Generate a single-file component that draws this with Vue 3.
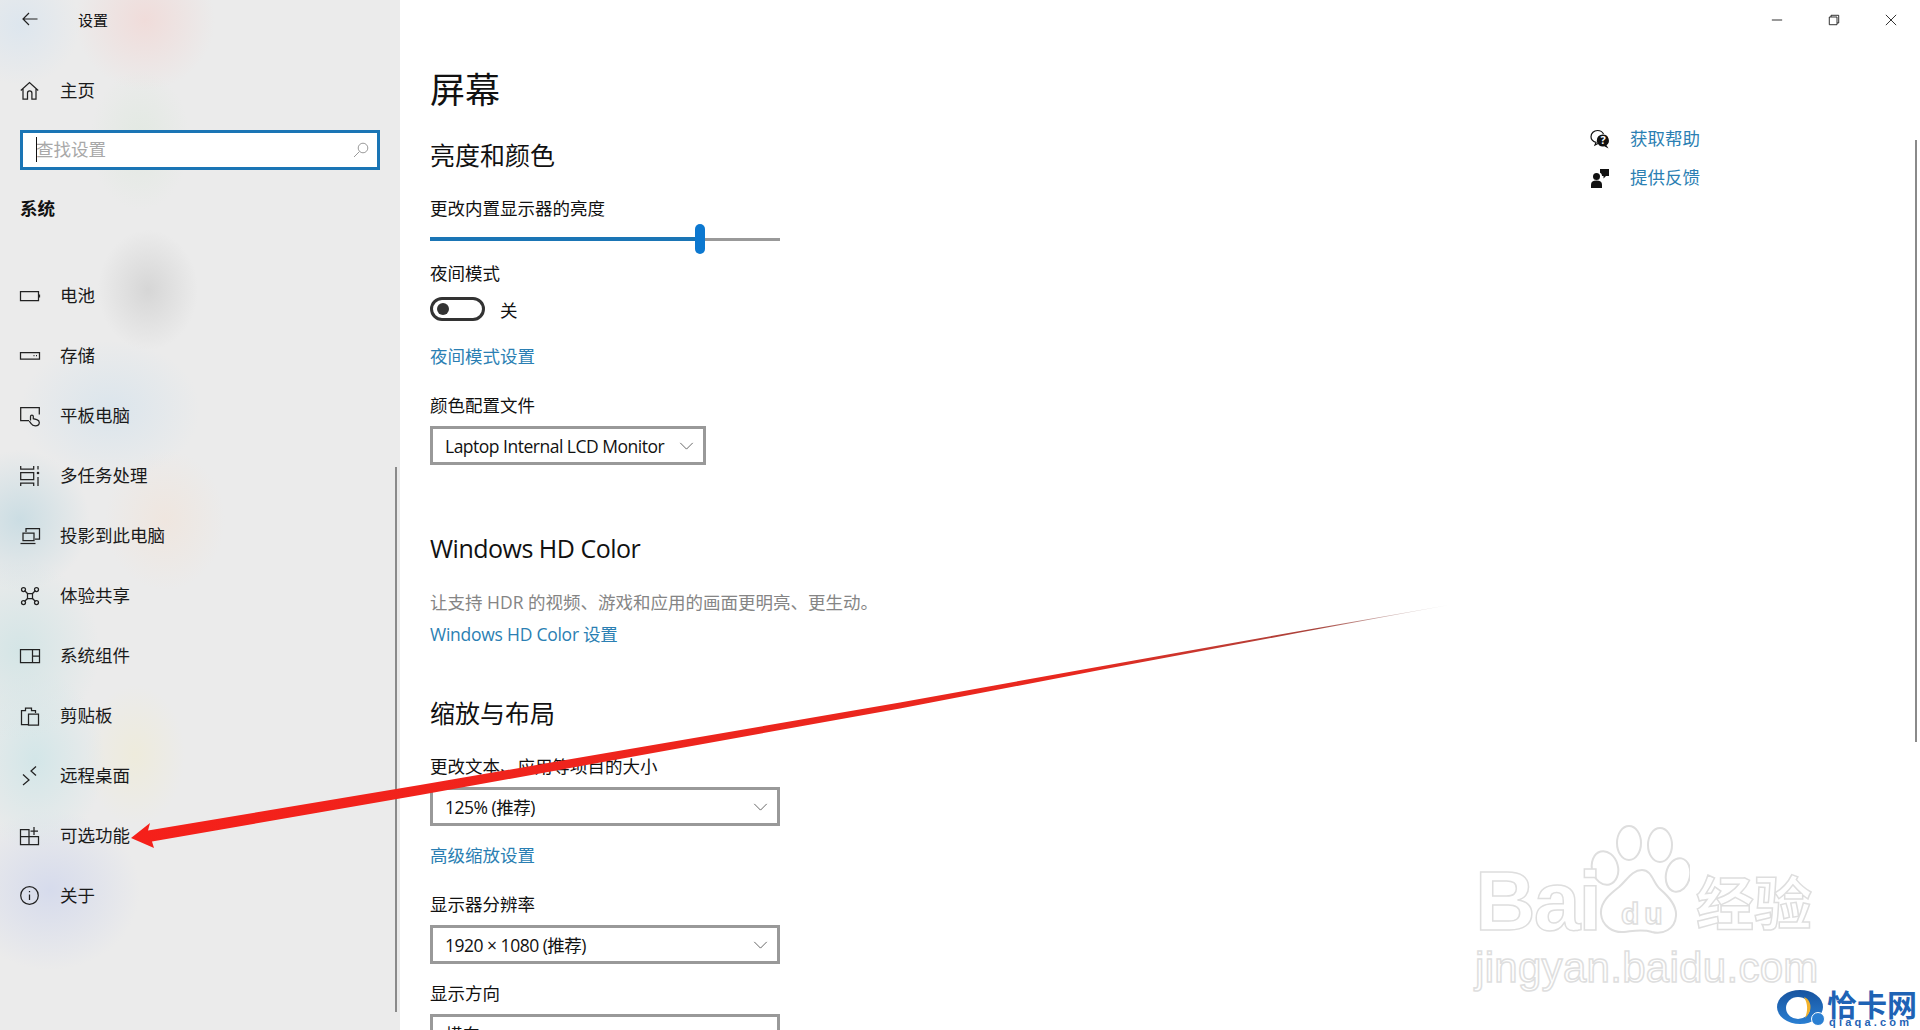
<template>
  <div class="window">
    <aside class="sidebar">
      <div class="titlebar">
        <svg class="back" viewBox="0 0 16 14"><path d="M15.5 7H1M7 1 1 7l6 6" /></svg>
        <span>设置</span>
      </div>
      <div class="nav-row home">
        <svg class="icon" viewBox="0 0 20 20"><path d="M.8 9.5 9.5 1.5l8.7 8M3 8v10h4.5v-6a2.2 2.2 0 0 1 4.4 0v6H16V8" /></svg>
        <span>主页</span>
      </div>
      <div class="search">
        <span class="caret"></span>
        <span class="placeholder">查找设置</span>
        <svg class="search-icon" viewBox="0 0 16 16"><circle cx="10" cy="6" r="4.8" /><path d="M6.5 9.5 1 15" /></svg>
      </div>
      <div class="group-title">系统</div>
      <nav class="nav">
        <div v-for="item in navItems" :key="item.label" class="nav-row">
          <svg class="icon" viewBox="0 0 20 20" v-html="item.icon"></svg>
          <span>{{ item.label }}</span>
        </div>
      </nav>
      <div class="side-scroll"></div>
    </aside>

    <main class="main">
      <section class="content">
        <h1>屏幕</h1>
        <h2 class="first">亮度和颜色</h2>
        <div class="label brightness">更改内置显示器的亮度</div>
        <div class="slider">
          <div class="slider-fill" :style="{ width: brightness + 'px' }"></div>
          <div class="slider-thumb"></div>
          <div class="slider-rest"></div>
        </div>
        <div class="label night">夜间模式</div>
        <div class="toggle-row">
          <div class="toggle"><span class="knob"></span></div>
          <span>关</span>
        </div>
        <a class="link night-link">夜间模式设置</a>
        <div class="label profile">颜色配置文件</div>
        <div class="select small">
          <span class="latin">Laptop Internal LCD Monitor</span>
          <svg class="chev" viewBox="0 0 16 9"><path d="M1 1l7 7 7-7" /></svg>
        </div>

        <h2 class="hd">Windows HD Color</h2>
        <div class="desc">让支持 HDR 的视频、游戏和应用的画面更明亮、更生动。</div>
        <a class="link hd-link">Windows HD Color 设置</a>

        <h2 class="scale">缩放与布局</h2>
        <div class="label size">更改文本、应用等项目的大小</div>
        <div class="select">
          <span class="latin">125% (推荐)</span>
          <svg class="chev" viewBox="0 0 16 9"><path d="M1 1l7 7 7-7" /></svg>
        </div>
        <a class="link adv-link">高级缩放设置</a>
        <div class="label res">显示器分辨率</div>
        <div class="select">
          <span class="latin">1920 × 1080 (推荐)</span>
          <svg class="chev" viewBox="0 0 16 9"><path d="M1 1l7 7 7-7" /></svg>
        </div>
        <div class="label orient">显示方向</div>
        <div class="select">
          <span>横向</span>
        </div>
      </section>

      <section class="help">
        <div class="help-row">
          <svg class="help-icon" viewBox="0 0 20 20">
            <path class="thin" d="M8 14.5 5 16l1-2.6C3 12.5 1 10.500 1 7.800 1 4 4 1.500 7.500 1.500c2.800 0 5 1.400 6 3.500" />
            <path class="solid" d="M13 5.500a6 6 0 0 1 3.500 10.800l2 3.200-4.300-2.200A6 6 0 1 1 13 5.500z" />
            <text x="13" y="15" class="q">?</text>
          </svg>
          <a class="link">获取帮助</a>
        </div>
        <div class="help-row">
          <svg class="help-icon" viewBox="0 0 20 20">
            <circle class="solid" cx="6.500" cy="8.500" r="3.500" />
            <path class="solid" d="M1 20v-3.500c0-2.500 2-4 5.500-4s5.500 1.500 5.500 4V20z" />
            <path class="solid" d="M10 1h9v7h-3l-2.500 2.500V8H12c0-1.500-.8-2.500-2-3.200z" />
          </svg>
          <a class="link">提供反馈</a>
        </div>
      </section>

      <div class="win-controls">
        <svg viewBox="0 0 14 14"><path d="M1 7h12" /></svg>
        <svg viewBox="0 0 14 14"><path d="M1.500 3.500h9v9h-9zM3.500 3.500v-2h9v9h-2" /></svg>
        <svg viewBox="0 0 14 14"><path d="M1 1l12 12M13 1 1 13" /></svg>
      </div>
      <div class="main-scroll"></div>
    </main>

    <div class="watermark">
      <svg class="paw" viewBox="0 0 100 110">
        <ellipse cx="15" cy="43" rx="13" ry="17" transform="rotate(-15 15 43)" />
        <ellipse cx="39" cy="18" rx="12" ry="17" />
        <ellipse cx="70" cy="20" rx="12" ry="17" />
        <ellipse cx="88" cy="50" rx="12" ry="17" transform="rotate(12 88 50)" />
        <path d="M52 45c-10 0-15 10-23 17-9 7-19 15-18 27 1 12 12 19 23 18 10-1 18-3 28 0 11 3 23-3 24-16 1-11-8-20-16-27-7-6-8-19-18-19z" />
      </svg>
      <span class="wm-bai">Bai</span>
      <span class="wm-du">du</span>
      <span class="wm-cn">经验</span>
      <span class="wm-url">jingyan.baidu.com</span>
    </div>

    <div class="qiaqa">
      <svg class="qiaqa-logo" viewBox="0 0 48 36">
        <defs>
          <linearGradient id="ring" x1="0" y1="0" x2="0" y2="1">
            <stop offset="0" stop-color="#17539f" />
            <stop offset="1" stop-color="#2a7fd2" />
          </linearGradient>
        </defs>
        <ellipse cx="23" cy="17" rx="23" ry="17" fill="url(#ring)" />
        <ellipse cx="21" cy="18" rx="12" ry="11" fill="#fff" />
        <path d="M27 7c8 3 9 15 1 21 3-7 3-14-1-21z" fill="#f1b12c" />
        <circle cx="41" cy="29" r="6.500" fill="#2a7fd2" stroke="#fff" />
      </svg>
      <span class="qiaqa-name">恰卡网</span>
      <span class="qiaqa-url">qiaqa.com</span>
    </div>

    <svg class="arrow" viewBox="0 0 1920 1030">
      <defs>
        <linearGradient id="arrow-fade" x1="131" y1="838" x2="1449" y2="605" gradientUnits="userSpaceOnUse">
          <stop offset="0" stop-color="#f5201a" />
          <stop offset="0.72" stop-color="#e8281f" />
          <stop offset="0.9" stop-color="#a8443c" />
          <stop offset="1" stop-color="#bbb" stop-opacity="0.4" />
        </linearGradient>
      </defs>
      <path d="M131 838 150 823 148 830.500 420 785 900 702.500 1100 666.500 1300 631 1449 605 1300 632.500 1100 670 900 708.500 420 795 152 841.500 154 848z" fill="url(#arrow-fade)" />
    </svg>
  </div>
</template>

<script setup>
const brightness = 265

const navItems = [
  { label: '电池', icon: '<path d="M.5 5.500h18v9H.5z"/><path d="M19.500 8.500v3"/>' },
  { label: '存储', icon: '<path d="M.5 6.500h19v6.500H.5z"/><path d="M13.500 9.500h1M16 9.500h1"/>' },
  { label: '平板电脑', icon: '<path d="M9 14.500H.7V1.500h18.600v7"/><path d="M10.500 14.500v-4a1.400 1.400 0 0 1 2.800 0v2.200l3.500 1c1.500.5 2.500 1.300 2.500 2.800 0 2-1.500 3.300-4 3.300-2 0-3.300-.7-4-2l-2-2.700"/>' },
  { label: '多任务处理', icon: '<path d="M.7 0v3h13V0M.7 20v-3h13v3"/><path d="M.7 6.500h13v7H.7z"/><path d="M18 0v3.500M18 11v9"/><circle class="dot" cx="18" cy="7" r="1.300"/>' },
  { label: '投影到此电脑', icon: '<path d="M6 6V2.500h13.500V13H15"/><path d="M3 7h11v7.500H3z"/><path d="M.5 17.500h15"/>' },
  { label: '体验共享', icon: '<path d="M7.500 7.500h5v5h-5z"/><path d="M7.500 7.500 4.500 4.500M12.500 7.500l3-3M7.500 12.500l-3 3M12.500 12.500l3 3"/><circle cx="3.500" cy="3.500" r="2"/><circle cx="16.500" cy="3.500" r="2"/><circle cx="3.500" cy="16.500" r="2"/><circle cx="16.500" cy="16.500" r="2"/>' },
  { label: '系统组件', icon: '<path d="M.5 3.500h19v13H.5z"/><path d="M12.500 3.500v13M12.500 10h7"/>' },
  { label: '剪贴板', icon: '<path d="M8 18.500H1.500V4.500h4V2h6v2.500h4V7"/><path d="M8.500 8h10v11h-10z"/>' },
  { label: '远程桌面', icon: '<path d="M3 8.500l6 5.500-6 5"/><path d="M16 .5l-5 4.500 5 4.500"/>' },
  { label: '可选功能', icon: '<path d="M.5 3.500h8.500v7H.5zM.5 10.500h8.500v8H.5zM9 10.500h9.500v8H9z"/><path d="M14 1v8M10.500 5h7.500"/>' },
  { label: '关于', icon: '<circle cx="9.500" cy="9.500" r="8.800"/><path d="M9.500 8.500v5.500M9.500 5v1.300"/>' }
]
</script>

<style scoped>
.window {
  position: relative;
  display: flex;
  width: 1920px;
  height: 1030px;
  overflow: hidden;
  background: #fff;
  color: #111;
  font-family: "Open Sans", "Noto Sans CJK SC", sans-serif;
  font-size: 17.5px;
}

.sidebar {
  position: relative;
  flex: none;
  width: 400px;
  background-color: #ebebeb;
  background-image:
    radial-gradient(ellipse 70px 70px at 145px 20px, #f0dcda 0%, rgba(240, 220, 218, 0) 100%),
    radial-gradient(ellipse 60px 60px at 20px 25px, #dde6ee 0%, rgba(221, 230, 238, 0) 100%),
    radial-gradient(ellipse 50px 60px at 148px 290px, #d6d6d6 0%, rgba(214, 214, 214, 0) 100%),
    radial-gradient(ellipse 50px 70px at 140px 140px, #e2e9e2 0%, rgba(226, 233, 226, 0) 100%),
    radial-gradient(ellipse 90px 70px at 110px 410px, #dbe5ec 0%, rgba(219, 229, 236, 0) 100%),
    radial-gradient(ellipse 70px 70px at 20px 520px, #cbdde3 0%, rgba(203, 221, 227, 0) 100%),
    radial-gradient(ellipse 60px 70px at 165px 520px, #efe6df 0%, rgba(239, 230, 223, 0) 100%),
    radial-gradient(ellipse 80px 90px at 20px 650px, #d4e5e6 0%, rgba(212, 229, 230, 0) 100%),
    radial-gradient(ellipse 70px 90px at 35px 760px, #d3e6e8 0%, rgba(211, 230, 232, 0) 100%),
    radial-gradient(ellipse 50px 70px at 135px 755px, #eeebdc 0%, rgba(238, 235, 220, 0) 100%),
    radial-gradient(ellipse 90px 80px at 50px 890px, #d6dbec 0%, rgba(214, 219, 236, 0) 100%);
}

.titlebar {
  display: flex;
  align-items: center;
  height: 38px;
  padding-bottom: 2px;
  font-size: 15px;
}

.back {
  width: 16px;
  height: 14px;
  margin-left: 22px;
  margin-right: 40px;
  fill: none;
  stroke: #222;
  stroke-width: 1.2;
}

.nav-row {
  display: flex;
  align-items: center;
  gap: 20px;
  height: 60px;
  padding-left: 20px;
  color: #1a1a1a;
}

.nav-row span {
  margin: -3px 0 0 0;
}

.home {
  margin-top: 21px;
}

.icon {
  flex: none;
  width: 20px;
  height: 20px;
  overflow: visible;
  fill: none;
  stroke: #222;
  stroke-width: 1.25;
}

.search {
  position: relative;
  display: flex;
  align-items: center;
  justify-content: space-between;
  box-sizing: border-box;
  width: 360px;
  height: 40px;
  margin: 9px 0 0 20px;
  padding: 0 8px 0 13px;
  border: 3px solid #1a75b5;
  background: #fff;
}

.caret {
  position: absolute;
  left: 13px;
  top: 4px;
  width: 1px;
  height: 25px;
  background: #111;
}

.placeholder {
  margin-top: -3px;
  color: #a8a8a8;
}

.search-icon {
  width: 16px;
  height: 16px;
  fill: none;
  stroke: #9a9a9a;
  stroke-width: 1;
}

.group-title {
  height: 24px;
  margin: 26px 0 0 20px;
  line-height: 24px;
  font-weight: 700;
}

.nav {
  margin-top: 46px;
}

.side-scroll {
  position: absolute;
  left: 395px;
  top: 467px;
  width: 2px;
  height: 545px;
  background: #8a8a8a;
}

.main {
  position: relative;
  display: flex;
  flex: 1;
}

.content {
  flex: 1;
  padding: 66px 0 0 30px;
}

h1,
h2 {
  margin: 0;
  font-weight: 400;
}

h1 {
  height: 48px;
  font-size: 35px;
  line-height: 48px;
}

h2 {
  height: 36px;
  font-size: 25px;
  line-height: 36px;
}

.first {
  margin-top: 23px;
}

.hd {
  margin-top: 65px;
  letter-spacing: -0.5px;
}

.scale {
  margin-top: 49px;
}

.label,
.link,
.desc {
  display: block;
  height: 24px;
  line-height: 24px;
}

.link {
  color: #2b7fb3;
}

.desc {
  margin-top: 24px;
  color: #858585;
}

.brightness {
  margin-top: 23px;
}

.slider {
  display: flex;
  align-items: center;
  width: 350px;
  height: 30px;
  margin-top: 4px;
}

.slider-fill {
  height: 4px;
  background: #1a75b5;
}

.slider-thumb {
  width: 10px;
  height: 30px;
  border-radius: 5px;
  background: #0c78d0;
}

.slider-rest {
  flex: 1;
  height: 3px;
  background: #999;
}

.night {
  margin-top: 7px;
}

.toggle-row {
  display: flex;
  align-items: center;
  gap: 15px;
  height: 24px;
  margin-top: 12px;
}

.toggle {
  display: flex;
  align-items: center;
  box-sizing: border-box;
  width: 55px;
  height: 24px;
  padding-left: 4px;
  border: 3px solid #333;
  border-radius: 12px;
}

.knob {
  width: 12px;
  height: 12px;
  border-radius: 50%;
  background: #333;
}

.night-link {
  margin-top: 23px;
}

.profile {
  margin-top: 25px;
}

.select {
  display: flex;
  align-items: center;
  justify-content: space-between;
  box-sizing: border-box;
  width: 350px;
  height: 39px;
  margin-top: 9px;
  padding: 0 9px 0 12px;
  border: 3px solid #999;
  background: #fff;
  white-space: nowrap;
}

.small {
  width: 276px;
}

.latin {
  letter-spacing: -0.5px;
}

.chev {
  flex: none;
  width: 15px;
  height: 8px;
  fill: none;
  stroke: #555;
  stroke-width: 1;
}

.hd-link {
  margin-top: 8px;
  letter-spacing: -0.25px;
}

.size {
  margin-top: 23px;
}

.adv-link {
  margin-top: 17px;
}

.res {
  margin-top: 25px;
}

.orient {
  margin-top: 17px;
}

.help {
  flex: none;
  width: 330px;
  padding-top: 119px;
}

.help-row {
  display: flex;
  align-items: center;
  gap: 20px;
  height: 39px;
}

.help-row .link {
  margin-top: -2px;
}

.help-icon {
  width: 20px;
  height: 20px;
}

.thin {
  fill: none;
  stroke: #111;
  stroke-width: 1.2;
}

.solid {
  fill: #111;
}

.q {
  fill: #fff;
  font-size: 11px;
  font-weight: 700;
  text-anchor: middle;
}

.win-controls {
  position: absolute;
  top: 14px;
  right: 23px;
  display: flex;
  gap: 45px;
}

.win-controls svg {
  width: 12px;
  height: 12px;
  fill: none;
  stroke: #111;
  stroke-width: 1;
}

.main-scroll {
  position: absolute;
  right: 3px;
  top: 140px;
  width: 2px;
  height: 602px;
  background: #8a8a8a;
}

.watermark {
  position: absolute;
  left: 1470px;
  top: 820px;
  width: 350px;
  height: 175px;
  font-family: "Liberation Sans", "Noto Sans CJK SC", sans-serif;
  color: #fff;
  -webkit-text-stroke: 1.5px #dedede;
}

.watermark span {
  position: absolute;
  white-space: nowrap;
}

.paw {
  position: absolute;
  left: 120px;
  top: 5px;
  width: 100px;
  height: 110px;
  fill: #fff;
  stroke: #dedede;
  stroke-width: 2;
}

.wm-bai {
  left: 5px;
  top: 46px;
  font-size: 84px;
  line-height: 70px;
  font-weight: 700;
  letter-spacing: -2px;
}

.wm-du {
  left: 151px;
  top: 74px;
  font-size: 30px;
  line-height: 40px;
  font-weight: 700;
  letter-spacing: 5px;
}

.wm-cn {
  left: 226px;
  top: 50px;
  font-size: 58px;
  line-height: 70px;
  font-weight: 700;
}

.wm-url {
  left: 5px;
  top: 125px;
  font-size: 42px;
  line-height: 46px;
  letter-spacing: 0.3px;
}

.qiaqa {
  position: absolute;
  left: 1777px;
  top: 990px;
  width: 143px;
  height: 40px;
}

.qiaqa-logo {
  position: absolute;
  left: 0;
  top: 0;
  width: 48px;
  height: 36px;
}

.qiaqa-name {
  position: absolute;
  left: 50px;
  top: 0;
  color: #1f63b5;
  font-size: 30px;
  line-height: 27px;
  font-weight: 700;
  font-family: "Noto Sans CJK SC", sans-serif;
}

.qiaqa-url {
  position: absolute;
  left: 52px;
  top: 27px;
  color: #1f63b5;
  font-size: 11px;
  line-height: 11px;
  font-weight: 700;
  letter-spacing: 3.2px;
  font-family: "Liberation Sans", sans-serif;
}

.arrow {
  position: absolute;
  left: 0;
  top: 0;
  width: 1920px;
  height: 1030px;
  pointer-events: none;
}

.icon :deep(.dot) {
  fill: #222;
  stroke: none;
}
</style>

<style>
html,
body {
  overflow: hidden;
}
</style>
